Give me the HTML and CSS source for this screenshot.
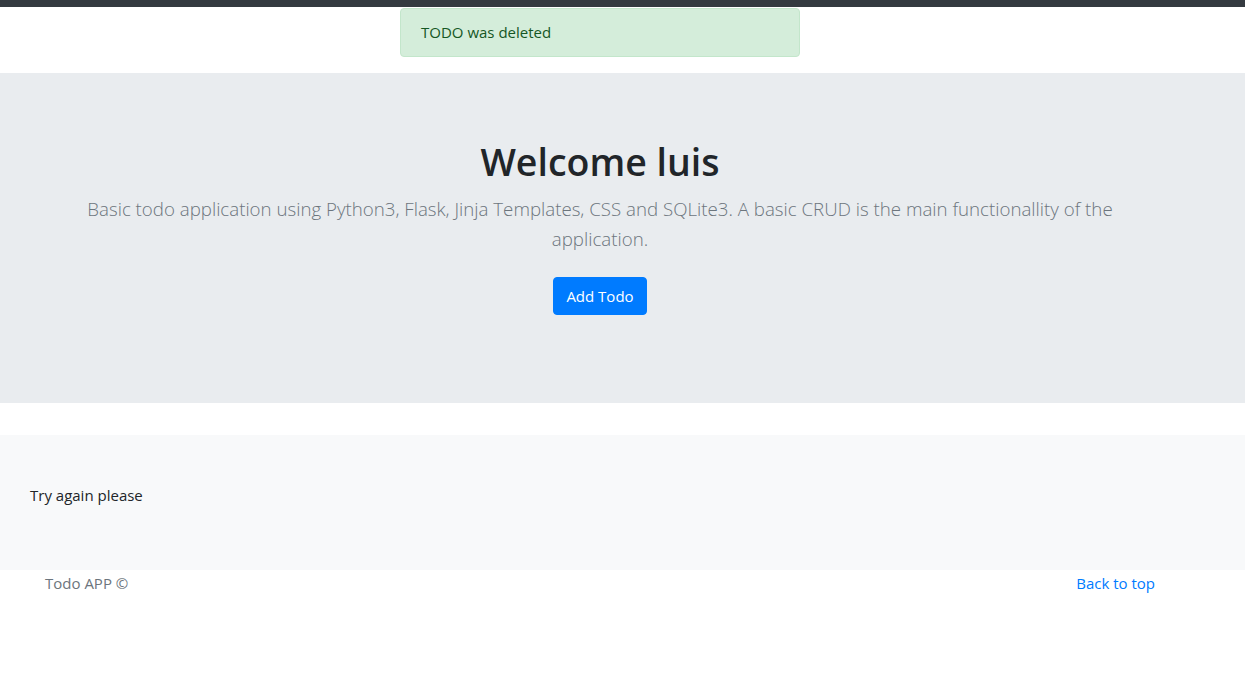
FILE: index.html
```html
<!DOCTYPE html>
<html lang="en">
<head>
<meta charset="utf-8">
<title>Todo APP</title>
<link rel="stylesheet" href="styles.css">
</head>
<body>
<div class="topbar"></div>
<div class="alert-wrap">
  <div class="alert">TODO was deleted</div>
</div>
<section class="jumbotron">
  <h1 class="title">Welcome luis</h1>
  <p class="lead">Basic todo application using Python3, Flask, Jinja Templates, CSS and SQLite3. A basic CRUD is the main functionallity of the application.</p>
  <div class="actions"><a class="btn" href="#">Add Todo</a></div>
</section>
<section class="content">
  <p class="message">Try again please</p>
</section>
<footer class="footer">
  <span class="copy">Todo APP ©</span>
  <a class="top-link" href="#">Back to top</a>
</footer>
</body>
</html>
```
FILE: styles.css
```css
html, body {
  margin: 0;
  padding: 0;
}
body {
  font-family: "Open Sans", "Noto Sans", "Liberation Sans", sans-serif;
  font-size: 16px;
  line-height: 1.5;
  color: #212529;
  background: #fff;
}
.topbar {
  height: 7px;
  background: #343a40;
}
.alert-wrap {
  display: flex;
  justify-content: center;
  padding-top: 1px;
  margin-bottom: 16px;
}
.alert {
  width: 400px;
  box-sizing: border-box;
  margin-left: -45px;
  padding: 12px 20px;
  background: #d4edda;
  border: 1px solid #c3e6cb;
  border-radius: 4px;
  color: #155724;
  font-size: 15px;
}
.jumbotron {
  background: #e9ecef;
  padding: 65px 120px 64px 75px;
  margin-bottom: 32px;
  text-align: center;
  height: 330px;
  box-sizing: border-box;
}
.title {
  margin: 0 0 8px;
  font-size: 37.5px;
  font-weight: 600;
  line-height: 48px;
  color: #212529;
}
.lead {
  margin: 0 0 23px;
  font-size: 18.7px;
  font-weight: 300;
  line-height: 30px;
  color: #6c757d;
}
.actions {
  display: flex;
  justify-content: center;
}
.btn {
  display: inline-block;
  padding: 6px 12px;
  font-size: 15px;
  line-height: 24px;
  color: #fff;
  background: #007bff;
  border: 1px solid #007bff;
  border-radius: 4px;
  text-decoration: none;
}
.content {
  background: #f8f9fa;
  height: 135px;
  box-sizing: border-box;
  padding: 48px 30px 0;
}
.message {
  margin: 0;
  font-size: 15px;
  line-height: 24px;
}
.footer {
  display: flex;
  justify-content: space-between;
  padding: 0 90px 0 45px;
  font-size: 15px;
  line-height: 24px;
  margin-top: 1px;
}
.copy {
  color: #6c757d;
}
.top-link {
  color: #007bff;
  text-decoration: none;
}
```
